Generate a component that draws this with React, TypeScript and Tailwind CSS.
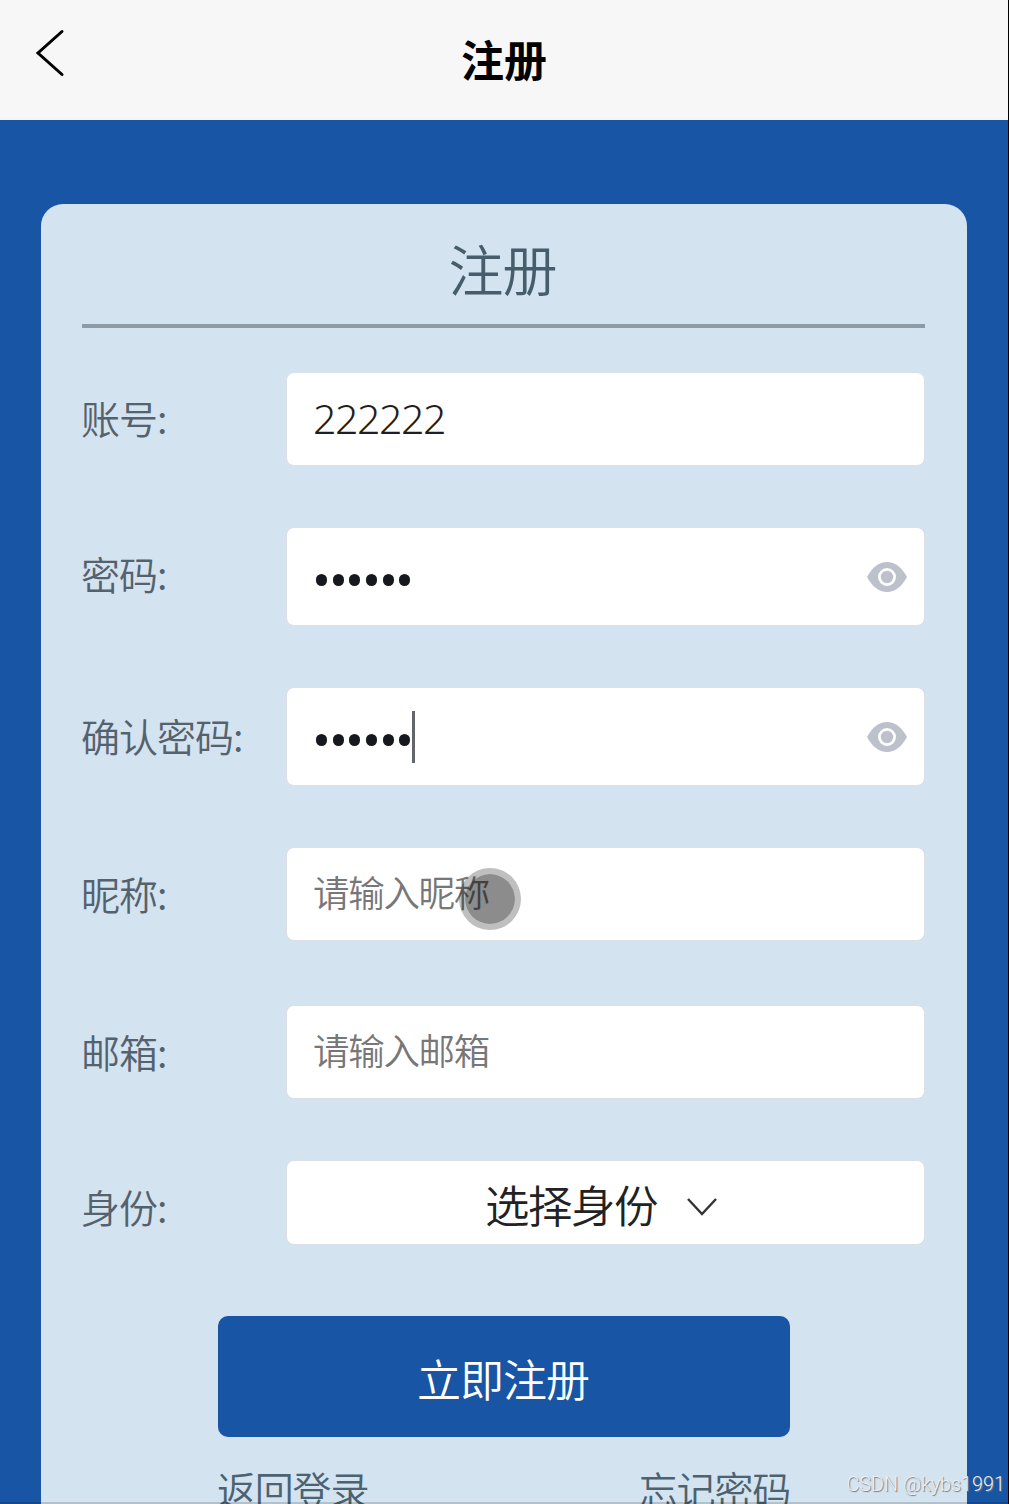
import type { ReactNode } from "react";

type Field = {
  label: string;
  row: string;
  labelClass: string;
  content: ReactNode;
};

function BackIcon() {
  return (
    <svg
      viewBox="0 0 32 50"
      className="h-[50px] w-8"
      fill="none"
      stroke="#000"
      strokeWidth={3}
      strokeLinecap="round"
    >
      <path d="M28 3.500 4 25 28 46.500" />
    </svg>
  );
}

function EyeIcon() {
  return (
    <svg viewBox="0 0 42 32" className="h-8 w-[42px] shrink-0">
      <path
        d="M1 16C6 6.500 13 1 21 1s15 5.500 20 15c-5 9.500-12 15-20 15S6 25.500 1 16z"
        fill="#bcc1cc"
      />
      <circle cx="21" cy="16" r="7.600" fill="#bcc1cc" stroke="#fff" strokeWidth={2.8} />
    </svg>
  );
}

function ChevronDown() {
  return (
    <svg viewBox="0 0 32 20" className="h-5 w-8" fill="none" stroke="#333" strokeWidth={2.4}>
      <path d="M2 2 16 17 30 2" />
    </svg>
  );
}

function Password({ focused }: { focused?: boolean }) {
  return (
    <>
      <div className="flex flex-1 items-center gap-[5.700px] pt-[7px] pl-0.5">
        {[0, 1, 2, 3, 4, 5].map((i) => (
          <span key={i} className="h-[12px] w-[11px] rounded-full bg-[#15191f]" />
        ))}
        {focused && <span className="-mt-[7px] -ml-1 h-[52px] w-[3px] bg-[#62666b]" />}
      </div>
      <EyeIcon />
    </>
  );
}

function Placeholder({ text }: { text: string }) {
  return (
    <span className="-ml-px pb-1 text-[36.500px] leading-none tracking-[-1.300px] text-[#777]">
      {text}
    </span>
  );
}

const FIELDS: Field[] = [
  {
    label: "账号:",
    row: "mt-[44px] h-[94px]",
    labelClass: "pb-[3px]",
    content: (
      <span className="-ml-px pb-0.5 font-['Noto_Sans'] text-[41px] leading-none font-light tracking-[-1.400px] text-[#1c1f24]">
        222222
      </span>
    ),
  },
  { label: "密码:", row: "mt-[61px] h-[99px]", labelClass: "pb-[6px]", content: <Password /> },
  {
    label: "确认密码:",
    row: "mt-[61px] h-[99px]",
    labelClass: "pb-[3px]",
    content: <Password focused />,
  },
  {
    label: "昵称:",
    row: "mt-[61px] h-[94px]",
    labelClass: "pb-[1px]",
    content: <Placeholder text="请输入昵称" />,
  },
  {
    label: "邮箱:",
    row: "mt-[64px] h-[94px]",
    labelClass: "pb-[1px]",
    content: <Placeholder text="请输入邮箱" />,
  },
  {
    label: "身份:",
    row: "mt-[61px] h-[85px]",
    labelClass: "pt-[8px]",
    content: (
      <div className="flex flex-1 items-center pl-[171px]">
        <span className="pt-[3px] text-[44.500px] leading-none tracking-[-1.500px] text-[#222]">
          选择身份
        </span>
        <span className="ml-[29px] pt-2">
          <ChevronDown />
        </span>
      </div>
    ),
  },
];

function FieldRow({ field }: { field: Field }) {
  return (
    <div className={`flex ${field.row}`}>
      <div
        className={`-ml-px flex w-[205px] shrink-0 items-center text-[39px] leading-none tracking-[-1px] whitespace-nowrap text-[#54626e] ${field.labelClass}`}
      >
        {field.label}
      </div>
      <div className="flex flex-1 items-center rounded-lg border border-[#dcdfe6] bg-white pr-4 pl-[27px]">
        {field.content}
      </div>
    </div>
  );
}

export default function App() {
  return (
    <div className="relative flex h-[1504px] w-[1009px] flex-col overflow-hidden border-r border-black bg-[#1955a5] font-['Noto_Sans_CJK_SC',sans-serif] font-[350]">
      <header className="grid h-[120px] shrink-0 grid-cols-[1fr_auto_1fr] items-center bg-[#f7f7f7]">
        <div className="pb-[14px] pl-[34px]">
          <BackIcon />
        </div>
        <h1 className="pb-[3px] text-[43px] leading-none font-bold text-black">注册</h1>
      </header>

      <main className="mx-[41px] mt-[84px] flex h-[1400px] shrink-0 flex-col rounded-t-[22px] bg-[#d4e3f0] pr-[42px] pl-[41px]">
        <h2 className="flex h-[124px] items-center justify-center border-b-4 border-[#8e9aa4] pt-1.5 pr-0.5 text-[55px] leading-none tracking-[-1px] text-[#465d6c]">
          注册
        </h2>

        {FIELDS.map((field) => (
          <FieldRow key={field.label} field={field} />
        ))}

        <div className="mt-[71px] ml-[136px] w-[572px]">
          <button className="block h-[121px] w-full rounded-[10px] bg-[#1955a5] pt-0.5 pr-0.5 text-[44px] leading-none tracking-[-1px] text-white">
            立即注册
          </button>
          <div className="mt-8 -ml-px flex justify-between text-[39px] leading-none tracking-[-1.200px] text-[#4b6270]">
            <span>返回登录</span>
            <span>忘记密码</span>
          </div>
        </div>
      </main>

      {/* touch pointer */}
      <div className="absolute top-[868px] left-[459px] h-[62px] w-[62px] rounded-full border-[6px] border-black/25 bg-black/45 bg-clip-padding" />

      <div className="absolute right-[3px] bottom-[7px] font-['Roboto'] text-[19.800px] leading-6 font-light text-[#eceff2] [text-shadow:1px_1px_1px_#777]">
        CSDN @kybs1991
      </div>
      <div className="absolute inset-x-0 bottom-0 h-0.5 bg-black/15" />
    </div>
  );
}
